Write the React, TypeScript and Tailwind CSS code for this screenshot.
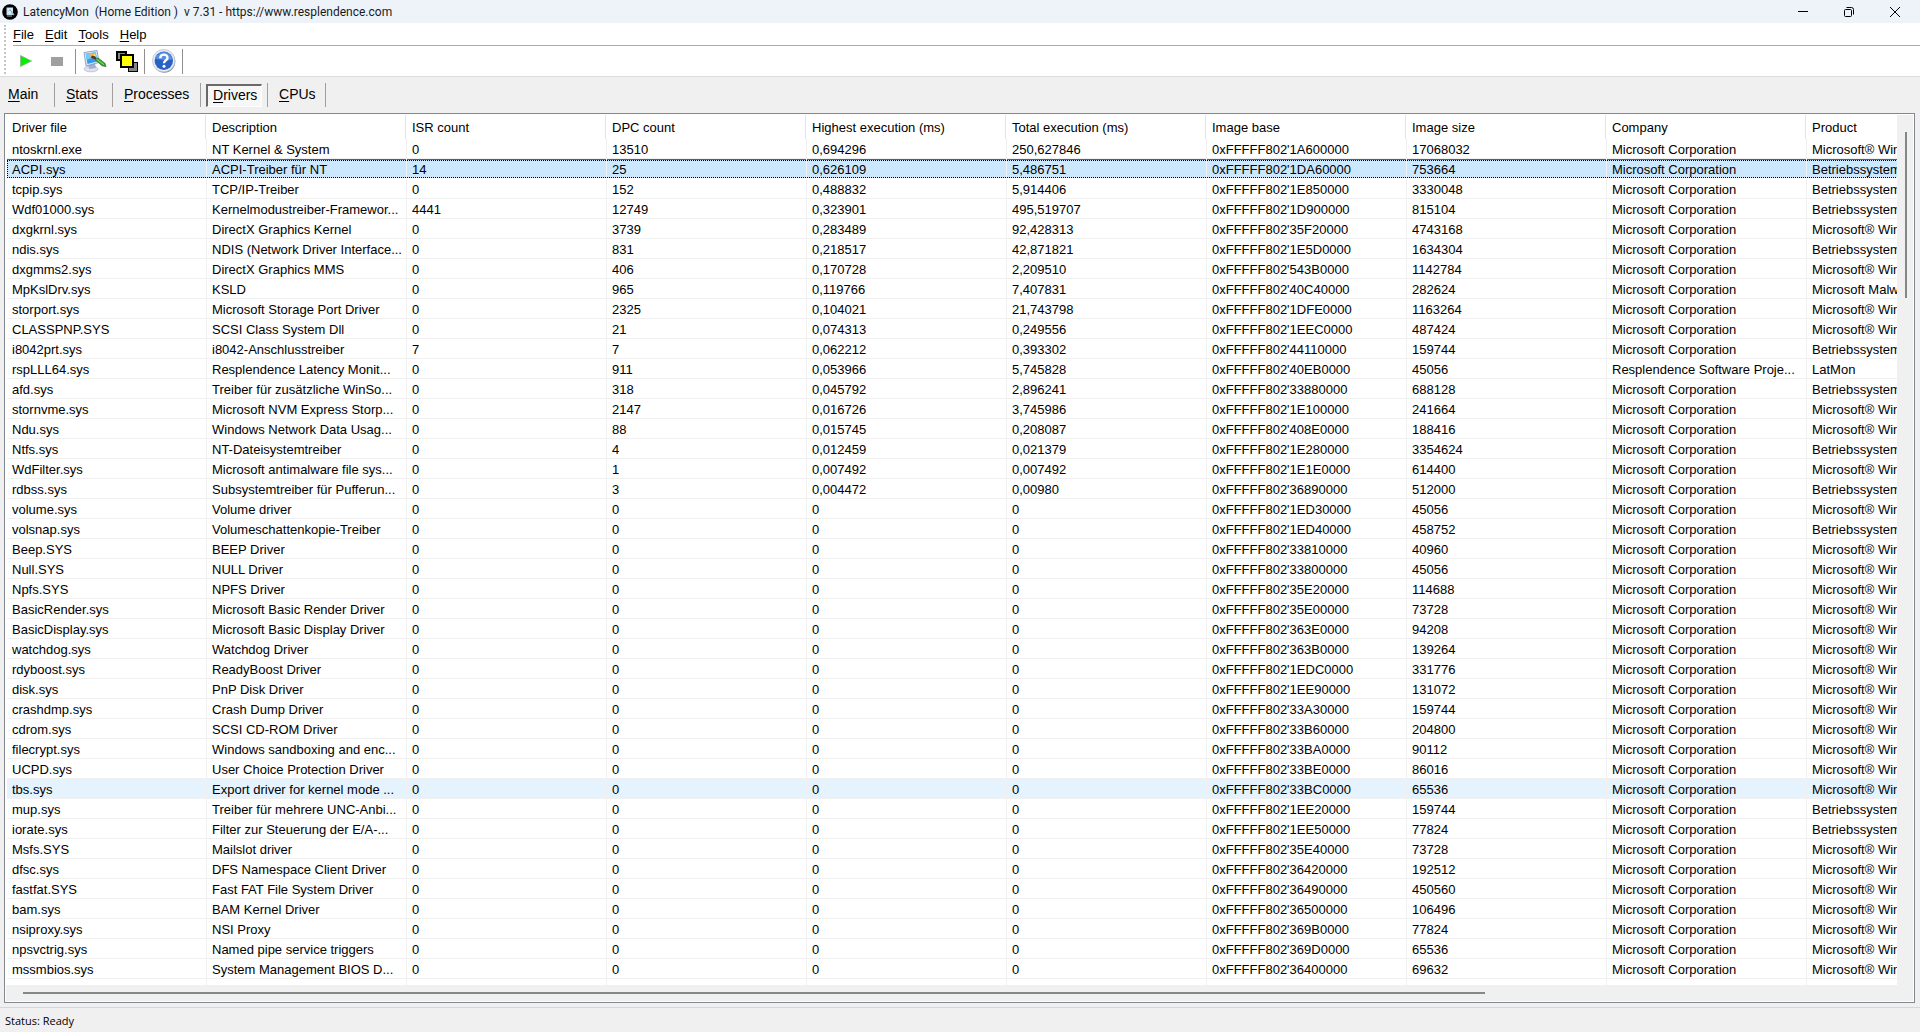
import clsx from 'clsx';

const columns = [
  'Driver file',
  'Description',
  'ISR count',
  'DPC count',
  'Highest execution (ms)',
  'Total execution (ms)',
  'Image base',
  'Image size',
  'Company',
  'Product',
];

const MS = 'Microsoft Corporation';
const WIN = 'Microsoft® Windows®';
const BS = 'Betriebssystem';

const drivers = [
  ['ntoskrnl.exe', 'NT Kernel & System', '0', '13510', '0,694296', '250,627846', "0xFFFFF802'1A600000", '17068032', MS, WIN],
  ['ACPI.sys', 'ACPI-Treiber für NT', '14', '25', '0,626109', '5,486751', "0xFFFFF802'1DA60000", '753664', MS, BS],
  ['tcpip.sys', 'TCP/IP-Treiber', '0', '152', '0,488832', '5,914406', "0xFFFFF802'1E850000", '3330048', MS, BS],
  ['Wdf01000.sys', 'Kernelmodustreiber-Framewor...', '4441', '12749', '0,323901', '495,519707', "0xFFFFF802'1D900000", '815104', MS, BS],
  ['dxgkrnl.sys', 'DirectX Graphics Kernel', '0', '3739', '0,283489', '92,428313', "0xFFFFF802'35F20000", '4743168', MS, WIN],
  ['ndis.sys', 'NDIS (Network Driver Interface...', '0', '831', '0,218517', '42,871821', "0xFFFFF802'1E5D0000", '1634304', MS, BS],
  ['dxgmms2.sys', 'DirectX Graphics MMS', '0', '406', '0,170728', '2,209510', "0xFFFFF802'543B0000", '1142784', MS, WIN],
  ['MpKslDrv.sys', 'KSLD', '0', '965', '0,119766', '7,407831', "0xFFFFF802'40C40000", '282624', MS, 'Microsoft Malware'],
  ['storport.sys', 'Microsoft Storage Port Driver', '0', '2325', '0,104021', '21,743798', "0xFFFFF802'1DFE0000", '1163264', MS, WIN],
  ['CLASSPNP.SYS', 'SCSI Class System Dll', '0', '21', '0,074313', '0,249556', "0xFFFFF802'1EEC0000", '487424', MS, WIN],
  ['i8042prt.sys', 'i8042-Anschlusstreiber', '7', '7', '0,062212', '0,393302', "0xFFFFF802'44110000", '159744', MS, BS],
  ['rspLLL64.sys', 'Resplendence Latency Monit...', '0', '911', '0,053966', '5,745828', "0xFFFFF802'40EB0000", '45056', 'Resplendence Software Proje...', 'LatMon'],
  ['afd.sys', 'Treiber für zusätzliche WinSo...', '0', '318', '0,045792', '2,896241', "0xFFFFF802'33880000", '688128', MS, BS],
  ['stornvme.sys', 'Microsoft NVM Express Storp...', '0', '2147', '0,016726', '3,745986', "0xFFFFF802'1E100000", '241664', MS, WIN],
  ['Ndu.sys', 'Windows Network Data Usag...', '0', '88', '0,015745', '0,208087', "0xFFFFF802'408E0000", '188416', MS, WIN],
  ['Ntfs.sys', 'NT-Dateisystemtreiber', '0', '4', '0,012459', '0,021379', "0xFFFFF802'1E280000", '3354624', MS, BS],
  ['WdFilter.sys', 'Microsoft antimalware file sys...', '0', '1', '0,007492', '0,007492', "0xFFFFF802'1E1E0000", '614400', MS, WIN],
  ['rdbss.sys', 'Subsystemtreiber für Pufferun...', '0', '3', '0,004472', '0,00980', "0xFFFFF802'36890000", '512000', MS, BS],
  ['volume.sys', 'Volume driver', '0', '0', '0', '0', "0xFFFFF802'1ED30000", '45056', MS, WIN],
  ['volsnap.sys', 'Volumeschattenkopie-Treiber', '0', '0', '0', '0', "0xFFFFF802'1ED40000", '458752', MS, BS],
  ['Beep.SYS', 'BEEP Driver', '0', '0', '0', '0', "0xFFFFF802'33810000", '40960', MS, WIN],
  ['Null.SYS', 'NULL Driver', '0', '0', '0', '0', "0xFFFFF802'33800000", '45056', MS, WIN],
  ['Npfs.SYS', 'NPFS Driver', '0', '0', '0', '0', "0xFFFFF802'35E20000", '114688', MS, WIN],
  ['BasicRender.sys', 'Microsoft Basic Render Driver', '0', '0', '0', '0', "0xFFFFF802'35E00000", '73728', MS, WIN],
  ['BasicDisplay.sys', 'Microsoft Basic Display Driver', '0', '0', '0', '0', "0xFFFFF802'363E0000", '94208', MS, WIN],
  ['watchdog.sys', 'Watchdog Driver', '0', '0', '0', '0', "0xFFFFF802'363B0000", '139264', MS, WIN],
  ['rdyboost.sys', 'ReadyBoost Driver', '0', '0', '0', '0', "0xFFFFF802'1EDC0000", '331776', MS, WIN],
  ['disk.sys', 'PnP Disk Driver', '0', '0', '0', '0', "0xFFFFF802'1EE90000", '131072', MS, WIN],
  ['crashdmp.sys', 'Crash Dump Driver', '0', '0', '0', '0', "0xFFFFF802'33A30000", '159744', MS, WIN],
  ['cdrom.sys', 'SCSI CD-ROM Driver', '0', '0', '0', '0', "0xFFFFF802'33B60000", '204800', MS, WIN],
  ['filecrypt.sys', 'Windows sandboxing and enc...', '0', '0', '0', '0', "0xFFFFF802'33BA0000", '90112', MS, WIN],
  ['UCPD.sys', 'User Choice Protection Driver', '0', '0', '0', '0', "0xFFFFF802'33BE0000", '86016', MS, WIN],
  ['tbs.sys', 'Export driver for kernel mode ...', '0', '0', '0', '0', "0xFFFFF802'33BC0000", '65536', MS, WIN],
  ['mup.sys', 'Treiber für mehrere UNC-Anbi...', '0', '0', '0', '0', "0xFFFFF802'1EE20000", '159744', MS, BS],
  ['iorate.sys', 'Filter zur Steuerung der E/A-...', '0', '0', '0', '0', "0xFFFFF802'1EE50000", '77824', MS, BS],
  ['Msfs.SYS', 'Mailslot driver', '0', '0', '0', '0', "0xFFFFF802'35E40000", '73728', MS, WIN],
  ['dfsc.sys', 'DFS Namespace Client Driver', '0', '0', '0', '0', "0xFFFFF802'36420000", '192512', MS, WIN],
  ['fastfat.SYS', 'Fast FAT File System Driver', '0', '0', '0', '0', "0xFFFFF802'36490000", '450560', MS, WIN],
  ['bam.sys', 'BAM Kernel Driver', '0', '0', '0', '0', "0xFFFFF802'36500000", '106496', MS, WIN],
  ['nsiproxy.sys', 'NSI Proxy', '0', '0', '0', '0', "0xFFFFF802'369B0000", '77824', MS, WIN],
  ['npsvctrig.sys', 'Named pipe service triggers', '0', '0', '0', '0', "0xFFFFF802'369D0000", '65536', MS, WIN],
  ['mssmbios.sys', 'System Management BIOS D...', '0', '0', '0', '0', "0xFFFFF802'36400000", '69632', MS, WIN],
];

const SELECTED = 'ACPI.sys';
const HOVERED = 'tbs.sys';

const Hotkey = ({ label }: { label: string }) => (
  <>
    <span className="underline underline-offset-2">{label[0]}</span>
    {label.slice(1)}
  </>
);

const TitleBar = () => (
  <header className="flex h-[23px] shrink-0 items-center bg-[#eef3fa] font-['Roboto','Noto_Sans',sans-serif] text-xs text-[#1a1a1a]">
    <svg className="mr-[5px] ml-0.5 h-4 w-4 shrink-0" viewBox="0 0 16 16" aria-hidden="true">
      <circle cx="8" cy="8" r="7.8" fill="#000" />
      <path d="M4.5 3.5h6.5v7.5H4.5z" fill="#c4dff0" />
      <path d="M6 4.5h4v4.5H6z" fill="#e9f5fb" />
      <path d="M9 7.5l3 3.5M5 12h5" stroke="#9db4c2" strokeWidth="1.2" />
      <path d="M6.5 7.5l1.5-2 1.5 2.5" fill="none" stroke="#5f8fae" strokeWidth="0.8" />
    </svg>
    <h1 className="flex-1 whitespace-pre">LatencyMon  (Home Edition )  v 7.31 - https://www.resplendence.com</h1>
    <div className="mr-0.5 flex h-full">
      <button type="button" aria-label="Minimize" className="flex w-[46px] items-center justify-center">
        <svg width="10" height="10" viewBox="0 0 10 10"><path d="M0 4.5h10" stroke="#000" /></svg>
      </button>
      <button type="button" aria-label="Restore" className="flex w-[46px] items-center justify-center">
        <svg width="10" height="10" viewBox="0 0 10 10" fill="none" stroke="#000">
          <rect x="0.5" y="2.5" width="7" height="7" rx="1" />
          <path d="M2.5 0.5h5a2 2 0 0 1 2 2v5" />
        </svg>
      </button>
      <button type="button" aria-label="Close" className="flex w-[46px] items-center justify-center">
        <svg width="10" height="10" viewBox="0 0 10 10"><path d="M0 0l10 10M10 0L0 10" stroke="#000" /></svg>
      </button>
    </div>
  </header>
);

const Separator = () => <div className="h-[25px] w-px bg-[#8f8f8f]" />;

const Toolbars = () => (
  <div className="flex shrink-0 bg-white">
    <div className="flex w-[13px] shrink-0 flex-col border-b border-[#dcdcdc] py-0.5 pl-1">
      <div className="w-0 flex-1 border-l-2 border-dotted border-[#c4c4c4]" />
    </div>
    <div className="flex-1">
      <nav className="flex h-[23px] items-center gap-[11px] border-b border-[#ababb0] pt-0.5">
        {['File', 'Edit', 'Tools', 'Help'].map((item) => (
          <button key={item} type="button"><Hotkey label={item} /></button>
        ))}
      </nav>
      <div className="flex h-[31px] items-center border-b border-[#dcdcdc]">
        <button type="button" aria-label="Start" className="flex w-[31px] justify-start pl-[7px]">
          <svg width="12" height="12" viewBox="0 0 12 12">
            <path d="M0.5 0.5L11.5 6 0.5 11.5z" fill="#00f000" stroke="#8fae8f" strokeWidth="0.8" />
          </svg>
        </button>
        <button type="button" aria-label="Stop" className="flex w-[31px] justify-start pl-[7px]">
          <span className="h-[9px] w-3 bg-[#a0a0a0]" />
        </button>
        <Separator />
        <button type="button" aria-label="Options" className="flex w-9 pl-1.5">
          <svg width="26" height="24" viewBox="0 0 26 24">
            <ellipse cx="9" cy="20" rx="7" ry="2.8" fill="#dfe2f0" stroke="#a3a9c8" strokeWidth="0.6" />
            <path d="M6 15l7-1 1 5-7 1z" fill="#a9afd0" />
            <path d="M2 3.5L15 1.5l2 12L4 17z" fill="#d8e6f5" stroke="#7895bd" strokeWidth="0.8" />
            <path d="M3.7 4.8l10-1.6 1.5 9.4-9.7 2.4z" fill="#379be8" />
            <path d="M3.7 4.8l10-1.6.7 4-9.6 3.6z" fill="#79c8f6" />
            <path d="M8 5.3l5-1 .7 3.5-4.8 1.2z" fill="#f5b23a" />
            <path d="M8.5 8.2l3-2.4 3 3.5-1.6 1.2z" fill="#5b3814" />
            <path d="M10 6l3-.6.5 2z" fill="#fff1a8" />
            <path d="M13 10.5l3-1.6 6.8 5.3 1.2 3.3-4-.8z" fill="#38a32e" stroke="#176d18" strokeWidth="0.7" />
            <path d="M14.5 10.2l7.5 5.5" stroke="#90dc72" strokeWidth="1" />
          </svg>
        </button>
        <button type="button" aria-label="Windows" className="flex w-8 pl-1">
          <svg width="22" height="21" viewBox="0 0 22 21" shapeRendering="crispEdges">
            <rect x="1" y="1" width="9" height="8" fill="#858585" stroke="#000" strokeWidth="2" />
            <rect x="12.5" y="11.5" width="9" height="9" fill="#858585" stroke="#000" strokeWidth="1" />
            <rect x="5" y="4" width="12" height="12" fill="#ffff00" stroke="#000" strokeWidth="2" />
            <path d="M7 6.5h9M7 8.5h9M7 10.5h9M7 12.5h9M7 14.5h9" stroke="#fffcbc" strokeDasharray="1 1" />
          </svg>
        </button>
        <Separator />
        <button type="button" aria-label="Help" className="flex w-[37px] pl-[7px]">
          <svg width="24" height="24" viewBox="0 0 24 24">
            <circle cx="12.3" cy="12.8" r="11" fill="#8a8f9c" />
            <circle cx="11.7" cy="11.7" r="11.2" fill="#e7ebf3" stroke="#b4bccb" strokeWidth="0.7" />
            <circle cx="11.8" cy="11.8" r="9.2" fill="#2860c4" />
            <path d="M3 10a9 9 0 0 1 17.5 0C15 13 8 9.5 3 10z" fill="#5590e2" />
            <path
              d="M8.3 9.2c0-4.8 7.2-4.6 7.2-.4 0 2.9-3.5 2.6-3.5 5.4"
              fill="none"
              stroke="#fff"
              strokeWidth="2.4"
            />
            <circle cx="12" cy="17.3" r="1.5" fill="#fff" />
          </svg>
        </button>
        <Separator />
      </div>
    </div>
  </div>
);

const tabs = [
  { label: 'Main', className: 'w-[55px] pb-0.5 pl-2' },
  { label: 'Stats', className: 'w-[58px] pb-0.5 pl-[11px]' },
  { label: 'Processes', className: 'w-[88px] pb-0.5 pl-[11px]' },
  { label: 'Drivers', className: 'w-[67px] pl-[5px]' },
  { label: 'CPUs', className: 'w-[58px] pb-0.5 pl-[11px]' },
];

const Tabs = () => (
  <div role="tablist" className="flex h-9 shrink-0 items-start pt-1.5 text-sm">
    {tabs.map(({ label, className }) => (
      <button
        key={label}
        type="button"
        role="tab"
        aria-selected={label === 'Drivers'}
        className={clsx('flex h-6 items-center border-r border-[#a0a0a0] text-left', className)}
      >
        {label === 'Drivers' ? (
          <span className="flex h-[23px] w-14 items-center border-t-2 border-r border-b border-l-2 border-t-[#696969] border-r-white border-b-white border-l-[#696969] bg-[#f7f7f7] pb-0.5 pl-[5px]">
            <span><Hotkey label={label} /></span>
          </span>
        ) : (
          <span><Hotkey label={label} /></span>
        )}
      </button>
    ))}
  </div>
);

const DriverRow = ({ cells }: { cells: string[] }) => {
  const selected = cells[0] === SELECTED;

  if (selected) {
    return (
      <tr className="h-5" aria-selected="true">
        {cells.map((cell, i) => (
          <td key={columns[i]} className="border-r border-b border-r-[#f0f0f0] border-b-white p-0">
            <div className="border-t border-[#0078d7] bg-[#cce8ff]">
              <div
                className={clsx(
                  'h-[18px] overflow-hidden border-y border-dotted border-black leading-[18px] whitespace-nowrap',
                  i === 0 ? 'border-l pl-1' : 'pl-[5px]',
                )}
              >
                {cell}
              </div>
            </div>
          </td>
        ))}
      </tr>
    );
  }

  return (
    <tr className={clsx('h-5', cells[0] === HOVERED && 'bg-[#e5f3ff]')}>
      {cells.map((cell, i) => (
        <td
          key={columns[i]}
          className="overflow-hidden border-r border-b border-[#f0f0f0] p-0 pt-px pl-[5px] leading-[17px] whitespace-nowrap"
        >
          {cell}
        </td>
      ))}
    </tr>
  );
};

const DriverTable = () => (
  <main className="mr-[5px] ml-1 flex min-h-0 flex-1 flex-col border border-[#828790] bg-white p-px">
    <div className="flex min-h-0 flex-1">
      <div className="min-w-0 flex-1 overflow-hidden pl-px">
        <table className="w-[2000px] table-fixed border-separate border-spacing-0">
          <thead>
            <tr className="h-6">
              {columns.map((column) => (
                <th key={column} scope="col" className="p-0 text-left font-normal">
                  <div className="mr-px h-6 border-r border-[#e5e5e5] pl-[5px] leading-[26px]">{column}</div>
                </th>
              ))}
            </tr>
          </thead>
          <tbody>
            {drivers.map((cells) => (
              <DriverRow key={cells[0]} cells={cells} />
            ))}
            <tr className="h-5" aria-hidden="true">
              {columns.map((column) => (
                <td key={column} className="border-r border-[#f0f0f0] p-0" />
              ))}
            </tr>
          </tbody>
        </table>
      </div>
      <div className="flex w-4 shrink-0 justify-end bg-[#f0f0f0] pt-[17px] pr-1.5">
        <div className="h-[166px] w-0.5 bg-[#868686]" />
      </div>
    </div>
    <div className="flex h-4 shrink-0 items-center bg-[#f0f0f0] pr-4 pl-[17px]">
      <div className="h-0.5 w-[78%] bg-[#868686]" />
    </div>
  </main>
);

const App = () => {
  return (
    <div className="flex h-screen flex-col overflow-hidden bg-[#f0f0f0] font-['Liberation_Sans',Arial,sans-serif] text-[13px] text-black">
      <TitleBar />
      <Toolbars />
      <Tabs />
      <DriverTable />
      <footer className="mt-1 flex h-[25px] shrink-0 items-center border-t border-[#d7d7d7] pt-0.5 pl-[5px] font-['Open_Sans','Noto_Sans',sans-serif] text-[11px]">
        Status: Ready
      </footer>
    </div>
  );
};

export default App;
